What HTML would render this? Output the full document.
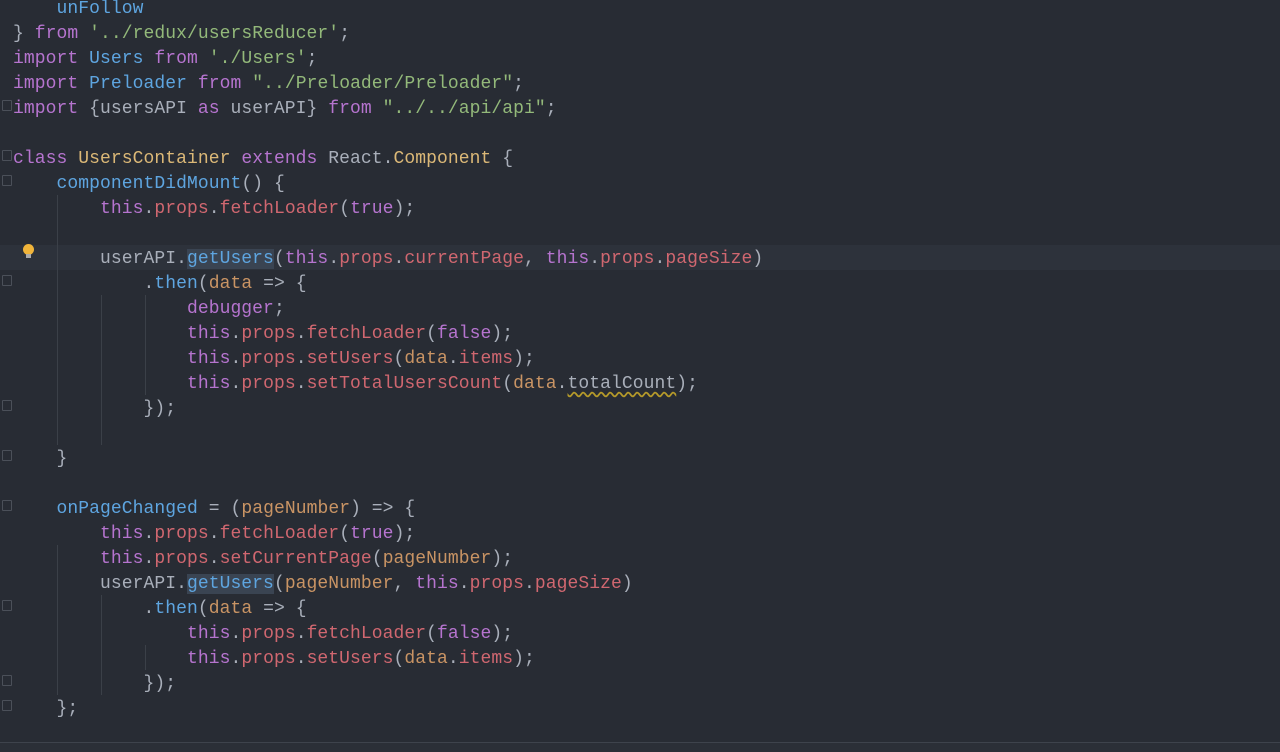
<!DOCTYPE html>
<html><head><meta charset="utf-8"><style>
html,body{margin:0;padding:0;background:#282c34;width:1280px;height:751px;overflow:hidden;}
#ed{position:absolute;left:0;top:0;width:1280px;height:742px;background:#282c34;}
#bot{position:absolute;left:0;top:742px;width:1280px;height:9px;background:#2b2f37;border-top:1px solid #3e434c;}
.hl{position:absolute;left:0;top:245px;width:1280px;height:25px;background:#2d323b;}
.g{position:absolute;width:1px;background:#3b4048;}
pre{position:absolute;left:13px;top:-3px;margin:0;font-family:"Liberation Mono",monospace;font-size:18px;letter-spacing:0.07px;line-height:25px;color:#a9afba;}
.k{color:#b674cf}.f{color:#5ea5e0}.s{color:#93b97a}.p{color:#d06770}.c{color:#dbb877}.o{color:#c99464}
.sel{background:#3a4452}
.w{text-decoration:underline wavy #b59a2a;text-underline-offset:3px;}
.fold{position:absolute;left:2px;width:8px;height:9px;border:1px solid #4b5059;border-radius:1px;}
.bulb{position:absolute;left:23px;top:244px;width:11px;height:11px;border-radius:50%;background:#f0b43a;}
.bulb2{position:absolute;left:26px;top:254px;width:5px;height:4px;background:#aaa;}
</style></head><body>
<div id="ed">
<div class="hl"></div>
<div class="g" style="left:57px;top:195px;height:250px"></div>
<div class="g" style="left:101px;top:295px;height:150px"></div>
<div class="g" style="left:145px;top:295px;height:100px"></div>
<div class="g" style="left:57px;top:545px;height:150px"></div>
<div class="g" style="left:101px;top:595px;height:100px"></div>
<div class="g" style="left:145px;top:645px;height:25px"></div>
<div class="fold" style="top:100px"></div>
<div class="fold" style="top:150px"></div>
<div class="fold" style="top:175px"></div>
<div class="fold" style="top:275px"></div>
<div class="fold" style="top:400px"></div>
<div class="fold" style="top:450px"></div>
<div class="fold" style="top:500px"></div>
<div class="fold" style="top:600px"></div>
<div class="fold" style="top:675px"></div>
<div class="fold" style="top:700px"></div>
<div class="bulb"></div><div class="bulb2"></div>
<pre>    <span class="f">unFollow</span>
} <span class="k">from</span> <span class="s">'../redux/usersReducer'</span>;
<span class="k">import</span> <span class="f">Users</span> <span class="k">from</span> <span class="s">'./Users'</span>;
<span class="k">import</span> <span class="f">Preloader</span> <span class="k">from</span> <span class="s">"../Preloader/Preloader"</span>;
<span class="k">import</span> {usersAPI <span class="k">as</span> userAPI} <span class="k">from</span> <span class="s">"../../api/api"</span>;

<span class="k">class</span> <span class="c">UsersContainer</span> <span class="k">extends</span> React.<span class="c">Component</span> {
    <span class="f">componentDidMount</span>() {
        <span class="k">this</span>.<span class="p">props</span>.<span class="p">fetchLoader</span>(<span class="k">true</span>);

        userAPI.<span class="f sel">getUsers</span>(<span class="k">this</span>.<span class="p">props</span>.<span class="p">currentPage</span>, <span class="k">this</span>.<span class="p">props</span>.<span class="p">pageSize</span>)
            .<span class="f">then</span>(<span class="o">data</span> => {
                <span class="k">debugger</span>;
                <span class="k">this</span>.<span class="p">props</span>.<span class="p">fetchLoader</span>(<span class="k">false</span>);
                <span class="k">this</span>.<span class="p">props</span>.<span class="p">setUsers</span>(<span class="o">data</span>.<span class="p">items</span>);
                <span class="k">this</span>.<span class="p">props</span>.<span class="p">setTotalUsersCount</span>(<span class="o">data</span>.<span class="w">totalCount</span>);
            });

    }

    <span class="f">onPageChanged</span> = (<span class="o">pageNumber</span>) => {
        <span class="k">this</span>.<span class="p">props</span>.<span class="p">fetchLoader</span>(<span class="k">true</span>);
        <span class="k">this</span>.<span class="p">props</span>.<span class="p">setCurrentPage</span>(<span class="o">pageNumber</span>);
        userAPI.<span class="f sel">getUsers</span>(<span class="o">pageNumber</span>, <span class="k">this</span>.<span class="p">props</span>.<span class="p">pageSize</span>)
            .<span class="f">then</span>(<span class="o">data</span> => {
                <span class="k">this</span>.<span class="p">props</span>.<span class="p">fetchLoader</span>(<span class="k">false</span>);
                <span class="k">this</span>.<span class="p">props</span>.<span class="p">setUsers</span>(<span class="o">data</span>.<span class="p">items</span>);
            });
    };</pre>
</div>
<div id="bot"></div>
</body></html>
